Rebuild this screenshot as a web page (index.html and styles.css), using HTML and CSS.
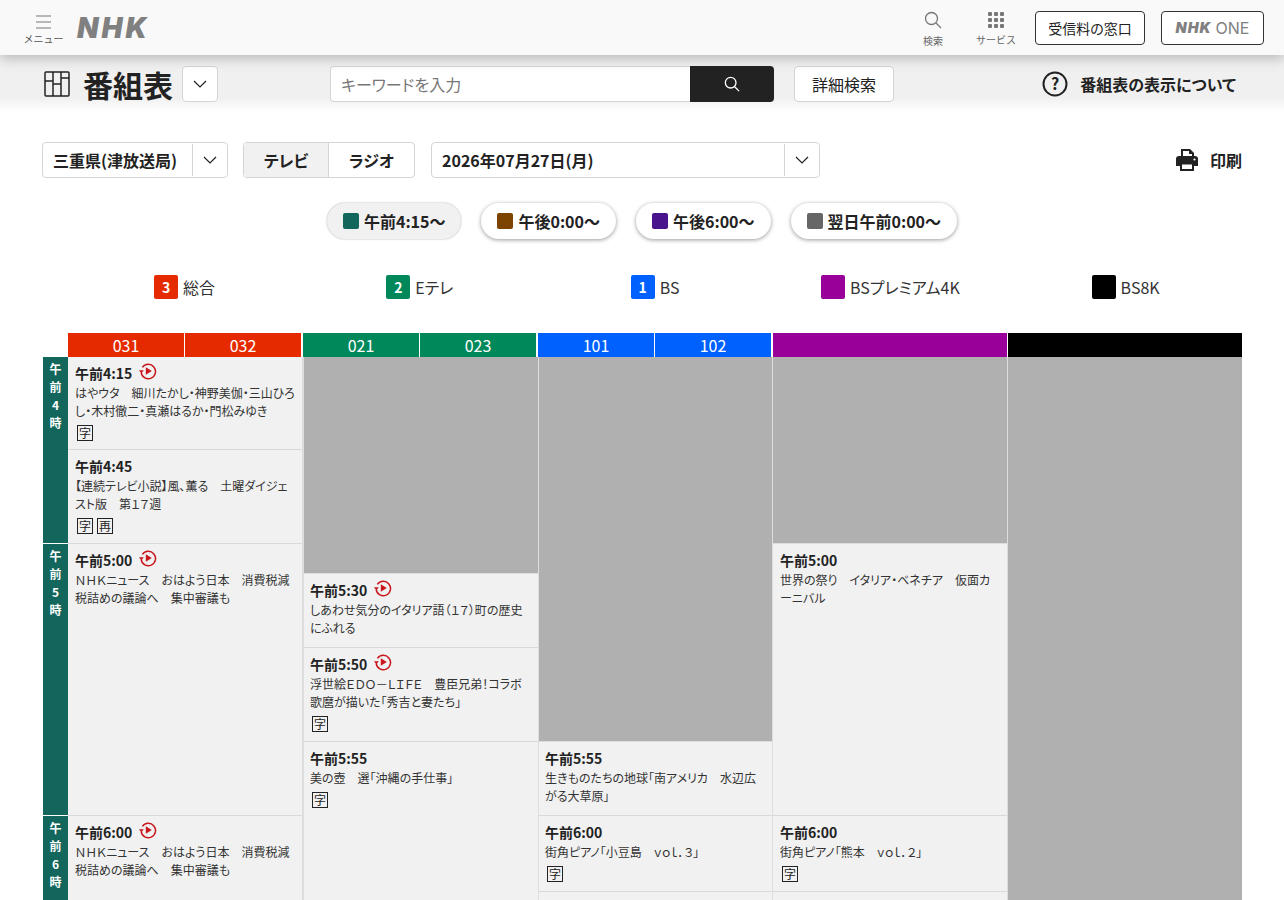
FILE: index.html
```html
<!DOCTYPE html>
<html lang="ja">
<head>
    <meta charset="UTF-8">
    <title>番組表</title>
    <link rel="stylesheet" href="styles.css">
</head>
<body>
    <svg class="defs" width="0" height="0">
        <symbol id="replay" viewBox="0 0 18 18">
            <path d="M3.4 5.4A7.2 7.2 0 1 1 2.2 10.6" fill="none" stroke="#c9171e" stroke-width="1.5"/>
            <path d="M0 8.2h4.8L2.4 11.4z" fill="#c9171e"/>
            <path d="M6.8 5.2l6 3.8-6 3.8z" fill="#c9171e"/>
        </symbol>
        <symbol id="chevron" viewBox="0 0 14 8">
            <path d="M1 1l6 6 6-6" fill="none" stroke="#222" stroke-width="1.2"/>
        </symbol>
    </svg>

    <header class="site-header">
        <div class="menu">
            <svg width="15" height="14" viewBox="0 0 15 14"><path d="M0 1h15M0 7h15M0 13h15" stroke="#777" stroke-width="1.1"/></svg>
            <span>メニュー</span>
        </div>
        <div class="logo">NHK</div>
        <div class="header-right">
            <div class="header-tool">
                <svg width="18" height="18" viewBox="0 0 18 18"><circle cx="7.5" cy="7.5" r="6" fill="none" stroke="#777" stroke-width="1.3"/><path d="M12 12l5 5" stroke="#777" stroke-width="1.3"/></svg>
                <span>検索</span>
            </div>
            <div class="header-tool">
                <svg width="16" height="16" viewBox="0 0 16 16" fill="#777">
                    <rect width="4" height="4" rx="1"/><rect x="6" width="4" height="4" rx="1"/><rect x="12" width="4" height="4" rx="1"/>
                    <rect y="6" width="4" height="4" rx="1"/><rect x="6" y="6" width="4" height="4" rx="1"/><rect x="12" y="6" width="4" height="4" rx="1"/>
                    <rect y="12" width="4" height="4" rx="1"/><rect x="6" y="12" width="4" height="4" rx="1"/><rect x="12" y="12" width="4" height="4" rx="1"/>
                </svg>
                <span>サービス</span>
            </div>
            <a class="header-button license">受信料の窓口</a>
            <a class="header-button one"><b>NHK</b>ONE</a>
        </div>
    </header>

    <div class="sub-header">
        <div class="page-title">
            <svg width="26" height="26" viewBox="0 0 26 26" fill="none" stroke="#222" stroke-width="1.5"><rect x="1" y="1" width="24" height="24" rx="1"/><path d="M9 1v24M17 1v24M1 10h8M9 13h8M17 7h8"/></svg>
            <h1>番組表</h1>
            <button class="icon-box"><svg width="14" height="8"><use href="#chevron"/></svg></button>
        </div>
        <div class="search">
            <div class="search-input">キーワードを入力</div>
            <button class="search-button"><svg width="16" height="16" viewBox="0 0 18 18"><circle cx="7.5" cy="7.5" r="6" fill="none" stroke="#fff" stroke-width="1.5"/><path d="M12 12l5 5" stroke="#fff" stroke-width="1.5"/></svg></button>
        </div>
        <button class="detail-search">詳細検索</button>
        <div class="about">
            <svg width="26" height="26" viewBox="0 0 26 26"><circle cx="13" cy="13" r="11.5" fill="none" stroke="#222" stroke-width="2"/><text x="13" y="18.5" text-anchor="middle" class="about-mark">?</text></svg>
            <span>番組表の表示について</span>
        </div>
    </div>

    <main class="content">
        <div class="controls">
            <div class="select area"><span class="select-text">三重県(津放送局)</span><span class="select-arrow"><svg width="14" height="8"><use href="#chevron"/></svg></span></div>
            <div class="toggle">
                <span class="toggle-item active">テレビ</span>
                <span class="toggle-item">ラジオ</span>
            </div>
            <div class="select date"><span class="select-text">2026年07月27日(月)</span><span class="select-arrow"><svg width="14" height="8"><use href="#chevron"/></svg></span></div>
            <div class="print">
                <svg width="22" height="22" viewBox="0 0 22 22" fill="#222"><path d="M5 0h9l4 4v5H5zm2 2v5h9V5h-3V2z"/><path d="M3 7h16a3 3 0 0 1 3 3v7h-4v-3H4v3H0v-7a3 3 0 0 1 3-3z"/><path d="M4 13h14v9H4zm2 2.500v4.500h10v-4.500z"/><circle cx="18.500" cy="10.500" r="1.100" fill="#fff"/></svg>
                <span>印刷</span>
            </div>
        </div>

        <div class="time-pills">
            <span class="pill active"><i class="chip morning"></i>午前4:15～</span>
            <span class="pill"><i class="chip noon"></i>午後0:00～</span>
            <span class="pill"><i class="chip evening"></i>午後6:00～</span>
            <span class="pill"><i class="chip night"></i>翌日午前0:00～</span>
        </div>

        <div class="channel-legend">
            <div class="legend-item"><span class="swatch red">3</span>総合</div>
            <div class="legend-item"><span class="swatch green">2</span>Eテレ</div>
            <div class="legend-item"><span class="swatch blue">1</span>BS</div>
            <div class="legend-item"><span class="swatch purple"></span>BSプレミアム4K</div>
            <div class="legend-item"><span class="swatch black"></span>BS8K</div>
        </div>

        <div class="channel-heads">
            <div class="head red"><span>031</span><span>032</span></div>
            <div class="head green"><span>021</span><span>023</span></div>
            <div class="head blue"><span>101</span><span>102</span></div>
            <div class="head purple"></div>
            <div class="head black"></div>
        </div>

        <div class="schedule">
            <div class="hours">
                <div class="hour" style="height:186px">午<br>前<br>4<br>時</div>
                <div class="hour" style="height:271px">午<br>前<br>5<br>時</div>
                <div class="hour" style="height:84px">午<br>前<br>6<br>時</div>
            </div>

            <div class="column">
                <div class="program" style="height:93px">
                    <div class="time">午前4:15<svg class="replay"><use href="#replay"/></svg></div>
                    <p>はやウタ　細川たかし・神野美伽・三山ひろし・木村徹二・真瀬はるか・門松みゆき</p>
                    <div class="marks"><span>字</span></div>
                </div>
                <div class="program" style="height:94px">
                    <div class="time">午前4:45</div>
                    <p>【連続テレビ小説】風、薫る　土曜ダイジェスト版　第１７週</p>
                    <div class="marks"><span>字</span><span>再</span></div>
                </div>
                <div class="program" style="height:272px">
                    <div class="time">午前5:00<svg class="replay"><use href="#replay"/></svg></div>
                    <p>ＮＨＫニュース　おはよう日本　消費税減税詰めの議論へ　集中審議も</p>
                </div>
                <div class="program" style="height:100px">
                    <div class="time">午前6:00<svg class="replay"><use href="#replay"/></svg></div>
                    <p>ＮＨＫニュース　おはよう日本　消費税減税詰めの議論へ　集中審議も</p>
                </div>
            </div>

            <div class="column">
                <div class="blank" style="height:217px"></div>
                <div class="program" style="height:74px">
                    <div class="time">午前5:30<svg class="replay"><use href="#replay"/></svg></div>
                    <p>しあわせ気分のイタリア語（１７）町の歴史にふれる</p>
                </div>
                <div class="program" style="height:94px">
                    <div class="time">午前5:50<svg class="replay"><use href="#replay"/></svg></div>
                    <p>浮世絵ＥＤＯ－ＬＩＦＥ　豊臣兄弟！コラボ歌麿が描いた「秀吉と妻たち」</p>
                    <div class="marks"><span>字</span></div>
                </div>
                <div class="program" style="height:200px">
                    <div class="time">午前5:55</div>
                    <p>美の壺　選「沖縄の手仕事」</p>
                    <div class="marks"><span>字</span></div>
                </div>
            </div>

            <div class="column">
                <div class="blank" style="height:385px"></div>
                <div class="program" style="height:74px">
                    <div class="time">午前5:55</div>
                    <p>生きものたちの地球「南アメリカ　水辺広がる大草原」</p>
                </div>
                <div class="program" style="height:76px">
                    <div class="time">午前6:00</div>
                    <p>街角ピアノ「小豆島　ｖｏｌ．３」</p>
                    <div class="marks"><span>字</span></div>
                </div>
                <div class="program" style="height:60px"></div>
            </div>

            <div class="column">
                <div class="blank" style="height:187px"></div>
                <div class="program" style="height:272px">
                    <div class="time">午前5:00</div>
                    <p>世界の祭り　イタリア・ベネチア　仮面カーニバル</p>
                </div>
                <div class="program" style="height:76px">
                    <div class="time">午前6:00</div>
                    <p>街角ピアノ「熊本　ｖｏｌ．２」</p>
                    <div class="marks"><span>字</span></div>
                </div>
                <div class="program" style="height:60px"></div>
            </div>

            <div class="column">
                <div class="blank" style="height:600px"></div>
            </div>
        </div>
    </main>
</body>
</html>
```

FILE: styles.css
```css
* {
    box-sizing: border-box;
}
html, body {
    margin: 0;
    padding: 0;
}
body {
    background-color: white;
    color: #222;
    font-family: "Noto Sans CJK JP", "Noto Sans", sans-serif;
    font-feature-settings: "palt";
}
button {
    font-family: inherit;
    font-feature-settings: inherit;
}
.defs {
    position: absolute;
}

/* header */
.site-header {
    position: relative;
    z-index: 2;
    display: flex;
    align-items: center;
    height: 55px;
    padding: 0 20px 0 24px;
    background-color: #f9f9f9;
    box-shadow: 0 3px 12px rgba(0, 0, 0, 0.25);
}
.menu {
    display: flex;
    flex-direction: column;
    align-items: center;
    width: 39px;
    color: #555;
    font-size: 10px;
    font-feature-settings: normal;
    line-height: 14px;
    white-space: nowrap;
    padding-top: 6px;
}
.menu svg {
    margin-bottom: 3px;
}
.logo {
    margin-left: 14px;
    color: #808080;
    font-family: Inter, sans-serif;
    font-size: 28px;
    font-weight: 900;
    font-style: italic;
    letter-spacing: 3px;
    line-height: 30px;
}
.header-right {
    display: flex;
    align-items: center;
    margin-left: auto;
}
.header-tool {
    display: flex;
    flex-direction: column;
    align-items: center;
    width: 40px;
    margin-right: 23px;
    color: #666;
    font-size: 10px;
    font-feature-settings: normal;
    line-height: 14px;
    white-space: nowrap;
    padding-top: 3px;
}
.header-tool svg {
    margin-bottom: 5px;
}
.header-tool:first-child {
    width: 20px;
    margin-right: 33px;
}
.header-tool:nth-child(2) {
    margin-right: 19px;
}
.header-button {
    display: flex;
    align-items: center;
    justify-content: center;
    height: 34px;
    border: 1px solid #333;
    border-radius: 4px;
    background-color: white;
    font-size: 14px;
}
.license {
    width: 110px;
    margin-right: 16px;
}
.one {
    width: 103px;
    color: #808080;
    font-family: Inter, sans-serif;
    font-size: 16px;
}
.one b {
    margin-right: 4px;
    font-size: 14.5px;
    font-weight: 900;
    font-style: italic;
    letter-spacing: 1px;
}

/* title bar */
.sub-header {
    display: flex;
    align-items: center;
    height: 57px;
    padding: 11px 48px 10px 44px;
    background: linear-gradient(#f0f0f0, #f0f0f0 75%, white);
}
.page-title {
    display: flex;
    align-items: center;
}
.page-title h1 {
    width: 89px;
    margin: 0 10px 0 13px;
    font-size: 30px;
    line-height: 36px;
    font-weight: 700;
    white-space: nowrap;
}
.icon-box {
    display: flex;
    align-items: center;
    justify-content: center;
    width: 36px;
    height: 36px;
    padding: 0;
    border: 1px solid #d5d5d5;
    border-radius: 4px;
    background-color: white;
}
.search {
    display: flex;
    margin-left: 112px;
}
.search-input {
    width: 360px;
    height: 36px;
    padding: 0 10px;
    border: 1px solid #d5d5d5;
    border-right: 0;
    border-radius: 4px 0 0 4px;
    background-color: white;
    color: #777;
    font-size: 16px;
    line-height: 34px;
}
.search-button {
    display: flex;
    align-items: center;
    justify-content: center;
    width: 84px;
    height: 36px;
    border: 0;
    border-radius: 0 4px 4px 0;
    background-color: #222;
}
.detail-search {
    width: 100px;
    height: 36px;
    margin-left: 20px;
    border: 1px solid #d5d5d5;
    border-radius: 4px;
    background-color: white;
    color: #222;
    font-size: 16px;
}
.about {
    display: flex;
    align-items: center;
    margin-left: auto;
    font-size: 16px;
    font-weight: 700;
}
.about span {
    margin-left: 12px;
}
.about-mark {
    fill: #222;
    font-size: 16px;
    font-weight: 700;
}

/* controls */
.content {
    padding: 30px 42px 0;
}
.controls {
    display: flex;
    align-items: center;
    height: 36px;
}
.select {
    display: flex;
    height: 36px;
    border: 1px solid #d5d5d5;
    border-radius: 4px;
    font-size: 16px;
    font-weight: 700;
    line-height: 34px;
}
.select-text {
    flex: 1;
    padding-left: 10px;
}
.select-arrow {
    display: flex;
    align-items: center;
    justify-content: center;
    width: 35px;
    margin: 1px 0;
    border-left: 1px solid #d5d5d5;
}
.area {
    width: 186px;
}
.date {
    width: 389px;
    margin-left: 16px;
}
.toggle {
    display: flex;
    width: 172px;
    height: 36px;
    margin-left: 15px;
    border: 1px solid #d5d5d5;
    border-radius: 4px;
    overflow: hidden;
    font-size: 16px;
    font-weight: 700;
    line-height: 34px;
    text-align: center;
}
.toggle-item {
    flex: 1;
}
.toggle-item.active {
    flex: 0 0 85px;
    background-color: #f1f1f1;
    border-right: 1px solid #d5d5d5;
}
.print {
    display: flex;
    align-items: center;
    margin-left: auto;
    font-size: 16px;
    font-weight: 700;
}
.print span {
    margin-left: 12px;
}

/* time pills */
.time-pills {
    display: flex;
    justify-content: center;
    gap: 20px;
    margin-top: 25px;
}
.pill {
    display: flex;
    align-items: center;
    height: 36px;
    padding: 0 16px;
    border-radius: 18px;
    background-color: white;
    box-shadow: 0 1px 4px rgba(0, 0, 0, 0.4);
    font-size: 16px;
    font-weight: 700;
}
.pill.active {
    background-color: #f1f1f1;
    box-shadow: 0 0 2px rgba(0, 0, 0, 0.35);
}
.chip {
    width: 16px;
    height: 16px;
    margin-right: 5px;
    border-radius: 2px;
}
.morning { background-color: #12665c; }
.noon { background-color: #7c4400; }
.evening { background-color: #4a148c; }
.night { background-color: #666; }

/* channels */
.channel-legend {
    display: grid;
    grid-template-columns: repeat(5, 235.25px);
    margin-top: 36px;
    padding-left: 25px;
}
.legend-item {
    display: flex;
    align-items: center;
    justify-content: center;
    height: 24px;
    color: #333;
    font-size: 16px;
}
.swatch {
    width: 24px;
    height: 24px;
    margin-right: 5px;
    border-radius: 2px;
    color: white;
    font-size: 14px;
    font-weight: 700;
    line-height: 24px;
    text-align: center;
}
.red { background-color: #e62a00; }
.green { background-color: #00885a; }
.blue { background-color: #0061ff; }
.purple { background-color: #990099; }
.black { background-color: #000; }

.channel-heads {
    display: grid;
    grid-template-columns: repeat(5, 235px);
    margin-top: 34px;
    padding-left: 26px;
}
.head {
    display: flex;
    height: 24px;
    margin-right: 2px;
    color: white;
    font-size: 16px;
    line-height: 25px;
    text-align: center;
}
.head.purple,
.head.black {
    margin-right: 1px;
}
.head span {
    flex: 1;
}
.head span + span {
    border-left: 1px solid white;
}

/* schedule */
.schedule {
    display: grid;
    grid-template-columns: 26px repeat(5, 235px);
    height: 543px;
    overflow: hidden;
}
.hours {
    display: flex;
    flex-direction: column;
    width: 25px;
    margin-left: 1px;
    gap: 1px;
}
.hour {
    flex-shrink: 0;
    padding-top: 3px;
    background-color: #12665c;
    color: white;
    font-size: 12px;
    font-weight: 700;
    line-height: 18px;
    text-align: center;
}
.column {
    display: flex;
    flex-direction: column;
}
.column:nth-child(2),
.column:nth-child(4),
.column:nth-child(5) {
    border-right: 1px solid #ddd;
}
.column:nth-child(3),
.column:nth-child(4) {
    border-left: 1px solid #ddd;
}
.blank {
    flex-shrink: 0;
    background-color: #b0b0b0;
    border-bottom: 1px solid #ddd;
}
.program {
    flex-shrink: 0;
    padding: 6px 7px 0;
    background-color: #f1f1f1;
    border-bottom: 1px solid #d9d9d9;
}
.column:nth-child(3) .program,
.column:nth-child(4) .program {
    padding-left: 6px;
}
.time {
    display: flex;
    align-items: center;
    height: 20px;
    font-size: 14px;
    font-weight: 700;
}
.replay {
    width: 18px;
    height: 18px;
    margin: -4px 0 0 7px;
}
.program p {
    margin: 1px 0 0;
    color: #333;
    font-size: 12px;
    line-height: 18px;
}
.marks {
    display: flex;
    gap: 4px;
    margin: 5px 0 0 2px;
}
.marks span {
    width: 16px;
    height: 16px;
    border: 1px solid #222;
    font-size: 12px;
    line-height: 14px;
    text-align: center;
}
```
